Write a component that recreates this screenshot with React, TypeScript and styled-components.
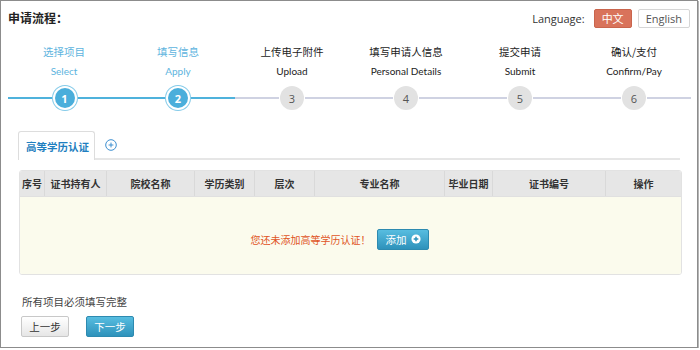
import React from 'react';
import styled, { createGlobalStyle } from 'styled-components';

const GlobalStyle = createGlobalStyle`
    html, body {
        margin: 0;
        padding: 0;
        background: #fff;
    }
    body {
        font-family: "Noto Sans CJK SC", "Open Sans", sans-serif;
        color: #333;
    }
`;

const Frame = styled.div`
    width: 696px;
    height: 346px;
    border: 1px solid #8c8c8c;
    box-shadow: 1px 1px 0 #b5b5b5;
    background: #fff;
    display: flex;
    flex-direction: column;
`;

const Header = styled.div`
    height: 34px;
    padding: 0 7px;
    display: flex;
    align-items: center;
    justify-content: space-between;
`;

const Title = styled.h1`
    margin: 0;
    font-size: 12px;
    font-weight: bold;
    color: #222;
    line-height: 16px;
`;

const LangBox = styled.div`
    display: flex;
    align-items: center;
    gap: 6px;
    font-size: 11px;
    color: #333;
    margin-top: 1px;
`;

const LangLabel = styled.span`
    font-family: "Open Sans", "Noto Sans CJK SC", sans-serif;
    margin-right: 3px;
`;

const LangButton = styled.span<{ $active?: boolean }>`
    height: 17px;
    line-height: 17px;
    padding: 0 7px;
    border-radius: 2px;
    font-size: 11px;
    font-family: "Open Sans", "Noto Sans CJK SC", sans-serif;
    color: ${p => (p.$active ? '#fff' : '#555')};
    background: ${p => (p.$active ? '#d9735b' : '#fff')};
    border: 1px solid ${p => (p.$active ? '#c9654d' : '#d6d6d6')};
`;

const Steps = styled.div`
    margin-top: 9px;
    padding-left: 6px;
    display: grid;
    grid-template-columns: repeat(6, 114px);
`;

const Step = styled.div<{ $done?: boolean }>`
    display: flex;
    flex-direction: column;
    align-items: center;
    color: ${p => (p.$done ? '#5db4de' : '#222')};
`;

const StepCn = styled.div`
    font-size: 10.5px;
    line-height: 16px;
`;

const StepEn = styled.div`
    margin-top: 3px;
    font-family: Lato, "Open Sans", sans-serif;
    font-size: 10px;
    line-height: 16px;
`;

const Track = styled.div`
    margin-top: 5px;
    width: 100%;
    height: 28px;
    display: flex;
    align-items: center;
`;

const Segment = styled.div<{ $done?: boolean; $first?: boolean }>`
    flex: 1;
    height: 2px;
    margin-left: ${p => (p.$first ? '1px' : '0')};
    background: ${p => (p.$done ? '#4fb2dc' : '#cfd2e2')};
`;

const Dot = styled.div<{ $done?: boolean }>`
    flex: none;
    width: ${p => (p.$done ? '20px' : '24px')};
    height: ${p => (p.$done ? '20px' : '24px')};
    margin: ${p => (p.$done ? '0 3px' : '0 1px')};
    border-radius: 50%;
    display: flex;
    align-items: center;
    justify-content: center;
    font-family: "Open Sans", sans-serif;
    font-size: 11px;
    font-weight: ${p => (p.$done ? 'bold' : 'normal')};
    color: ${p => (p.$done ? '#fff' : '#555')};
    background: ${p => (p.$done ? '#4aaedb' : '#e2e2e2')};
    box-shadow: ${p => (p.$done ? '0 0 0 2px #fff, 0 0 0 3px #85cbe9' : 'none')};
`;

const Content = styled.div`
    margin-top: 17px;
    padding: 0 17px;
    display: flex;
    flex-direction: column;
`;

const TabBar = styled.div`
    display: flex;
    align-items: flex-end;
    border-bottom: 2px solid #e6e6e6;
    height: 29px;
`;

const Tab = styled.div`
    height: 29px;
    margin-bottom: -2px;
    padding: 0 5px 0 7px;
    display: flex;
    align-items: center;
    font-size: 10.5px;
    font-weight: bold;
    color: #1f7fc0;
    background: #fff;
    border: 1px solid #ddd;
    border-bottom: none;
    border-radius: 3px 3px 0 0;
    box-sizing: border-box;
`;

const AddTab = styled.div`
    height: 27px;
    margin-left: 10px;
    display: flex;
    align-items: center;
`;

const Table = styled.div`
    margin-top: 10px;
    margin-left: 1px;
    width: 661px;
    border: 1px solid #e2e2e2;
    border-radius: 3px;
    overflow: hidden;
`;

const HeadRow = styled.div`
    display: grid;
    grid-template-columns: 24px 62px 88px 60px 60px 130px 48px 113px 1fr;
    height: 25px;
    background: #e6e6e6;
    border-bottom: 1px solid #e0e0e0;
`;

const HeadCell = styled.div`
    display: flex;
    align-items: center;
    justify-content: center;
    font-size: 10px;
    font-weight: bold;
    color: #333;
    border-left: 1px solid #d9d9d9;
    white-space: nowrap;
    &:first-child {
        border-left: none;
    }
`;

const EmptyBody = styled.div`
    height: 77px;
    background: #fbfbed;
    display: flex;
    align-items: center;
    justify-content: center;
    gap: 6px;
    padding-top: 7px;
    padding-right: 22px;
    box-sizing: border-box;
`;

const EmptyText = styled.span`
    font-size: 10px;
    color: #e0541e;
`;

const BlueButton = styled.button`
    height: 21px;
    padding: 0 7px 0 8px;
    display: inline-flex;
    align-items: center;
    gap: 4px;
    border: 1px solid #2d8ab0;
    border-radius: 2px;
    background: linear-gradient(#57bde0, #2e92bb);
    color: #fff;
    font-family: "Noto Sans CJK SC", sans-serif;
    font-size: 10.5px;
    cursor: pointer;
`;

const Footer = styled.div`
    margin-top: 19px;
    padding: 0 20px;
    display: flex;
    flex-direction: column;
    gap: 6px;
`;

const Note = styled.div`
    font-size: 10.5px;
    line-height: 16px;
    color: #444;
    padding-left: 1px;
`;

const NavRow = styled.div`
    display: flex;
    gap: 17px;
`;

const NavButton = styled.button<{ $primary?: boolean }>`
    width: 48px;
    height: 21px;
    padding: 0;
    border-radius: 2px;
    font-family: "Noto Sans CJK SC", sans-serif;
    font-size: 10.5px;
    cursor: pointer;
    color: ${p => (p.$primary ? '#fff' : '#333')};
    border: 1px solid ${p => (p.$primary ? '#2d8ab0' : '#c8c8c8')};
    background: ${p => (p.$primary ? 'linear-gradient(#57bde0, #2e92bb)' : 'linear-gradient(#ffffff, #e6e6e6)')};
`;

const steps = [
    { cn: '选择项目', en: 'Select' },
    { cn: '填写信息', en: 'Apply' },
    { cn: '上传电子附件', en: 'Upload' },
    { cn: '填写申请人信息', en: 'Personal Details' },
    { cn: '提交申请', en: 'Submit' },
    { cn: '确认/支付', en: 'Confirm/Pay' },
];

const columns = ['序号', '证书持有人', '院校名称', '学历类别', '层次', '专业名称', '毕业日期', '证书编号', '操作'];

const current = 2;

const PlusCircle: React.FC<{ size: number; color: string; filled?: boolean }> = ({ size, color, filled }) => (
    <svg width={size} height={size} viewBox="0 0 12 12">
        {filled ? (
            <>
                <circle cx="6" cy="6" r="5.5" fill="#fff" />
                <path d="M6 3.2v5.6M3.2 6h5.6" stroke={color} strokeWidth="1.8" />
            </>
        ) : (
            <>
                <circle cx="6" cy="6" r="5.3" fill="none" stroke={color} strokeWidth="1" />
                <path d="M6 3.6v4.8M3.6 6h4.8" stroke={color} strokeWidth="1" />
            </>
        )}
    </svg>
);

const App: React.FC = () => {
    return (
        <>
            <GlobalStyle />
            <Frame>
                <Header>
                    <Title>申请流程：</Title>
                    <LangBox>
                        <LangLabel>Language:</LangLabel>
                        <LangButton $active>中文</LangButton>
                        <LangButton>English</LangButton>
                    </LangBox>
                </Header>

                {/* progress steps */}
                <Steps>
                    {steps.map((s, i) => {
                        const done = i < current;
                        return (
                            <Step key={s.en} $done={done}>
                                <StepCn>{s.cn}</StepCn>
                                <StepEn>{s.en}</StepEn>
                                <Track>
                                    <Segment $done={done} $first={i === 0} />
                                    <Dot $done={done}>{i + 1}</Dot>
                                    <Segment $done={done} />
                                </Track>
                            </Step>
                        );
                    })}
                </Steps>

                <Content>
                    <TabBar>
                        <Tab>高等学历认证</Tab>
                        <AddTab>
                            <PlusCircle size={12} color="#3d8fd0" />
                        </AddTab>
                    </TabBar>

                    <Table>
                        <HeadRow>
                            {columns.map(c => (
                                <HeadCell key={c}>{c}</HeadCell>
                            ))}
                        </HeadRow>
                        <EmptyBody>
                            <EmptyText>您还未添加高等学历认证！</EmptyText>
                            <BlueButton>
                                添加
                                <PlusCircle size={10} color="#2e92bb" filled />
                            </BlueButton>
                        </EmptyBody>
                    </Table>
                </Content>

                <Footer>
                    <Note>所有项目必须填写完整</Note>
                    <NavRow>
                        <NavButton>上一步</NavButton>
                        <NavButton $primary>下一步</NavButton>
                    </NavRow>
                </Footer>
            </Frame>
        </>
    );
};

export default App;
